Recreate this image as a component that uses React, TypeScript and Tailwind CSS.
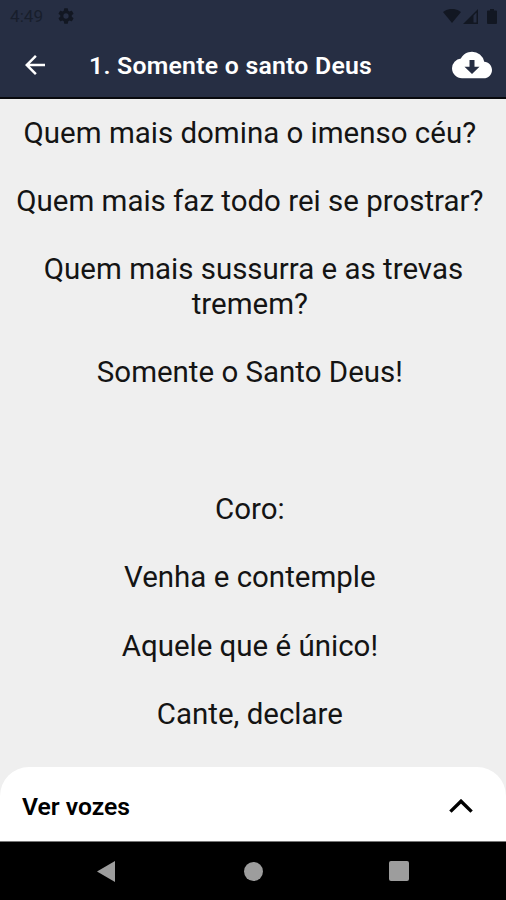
import { MdArrowBack } from "react-icons/md";

const lyrics = [
  "Quem mais domina o imenso céu?",
  "Quem mais faz todo rei se prostrar?",
  "Quem mais sussurra e as trevas tremem?",
  "Somente o Santo Deus!",
  "",
  "Coro:",
  "Venha e contemple",
  "Aquele que é único!",
  "Cante, declare",
];

export default function App() {
  return (
    <div className="flex h-[900px] w-[506px] flex-col overflow-hidden bg-[#efefef] font-['Roboto',sans-serif]">
      <StatusBar />
      <Header />
      <Lyrics />
      <VoicesSheet />
      <NavigationBar />
    </div>
  );
}

const StatusBar = () => {
  return (
    <div className="flex h-8 shrink-0 items-center justify-between bg-[#262e43] pr-[9px] pl-2.5 text-[#121722]">
      <div className="flex items-center gap-3.5">
        <span className="w-[34px] text-[17.200px] leading-8 whitespace-nowrap text-[#181e2c]">
          4:49
        </span>
        <svg viewBox="2 2 20 20" className="h-4 w-4" fill="currentColor">
          <path d="M19.14 12.94c.04-.3.06-.61.06-.94s-.02-.64-.07-.94l2.03-1.58a.49.49 0 0 0 .12-.61l-1.92-3.32a.49.49 0 0 0-.59-.22l-2.39.96a7 7 0 0 0-1.62-.94l-.36-2.54a.48.48 0 0 0-.48-.41h-3.84a.48.48 0 0 0-.47.41l-.36 2.54c-.59.24-1.13.57-1.62.94l-2.39-.96a.48.48 0 0 0-.59.22L2.74 8.87a.48.48 0 0 0 .12.61l2.03 1.58a6 6 0 0 0 0 1.88l-2.03 1.58a.49.49 0 0 0-.12.61l1.92 3.32c.12.22.37.29.59.22l2.39-.96c.5.38 1.03.7 1.62.94l.36 2.54c.05.24.24.41.48.41h3.84c.24 0 .44-.17.47-.41l.36-2.54a7 7 0 0 0 1.62-.94l2.39.96c.22.08.47 0 .59-.22l1.92-3.32a.48.48 0 0 0-.12-.61zM12 15.300a3.300 3.300 0 1 1 0-6.600 3.300 3.300 0 0 1 0 6.600" />
        </svg>
      </div>
      <div className="flex items-center">
        <svg viewBox="0 0 18 14" className="h-3.5 w-[18px]" fill="currentColor">
          <path d="M9 14 0 3a14.500 14.500 0 0 1 18 0z" />
        </svg>
        <svg
          viewBox="0 0 15 15"
          className="ml-0.5 h-[15px] w-[15px]"
          fill="currentColor"
        >
          <path d="M15 0v15H0zm-1.500 3.600L10.500 6.600v7h3z" fillRule="evenodd" />
        </svg>
        <svg
          viewBox="0 0 10 15"
          className="ml-[9px] h-[15px] w-2.5"
          fill="currentColor"
        >
          <path d="M3 0h4v1.500h2q1 0 1 1V14q0 1-1 1H1q-1 0-1-1V2.500q0-1 1-1h2z" />
        </svg>
      </div>
    </div>
  );
};

const Header = () => {
  return (
    <header className="flex h-[67px] shrink-0 items-center border-b-2 border-[#08090d] bg-[#262e43] pr-3.5 pl-5 text-white">
      <MdArrowBack size={30} />
      <h1 className="ml-[39px] flex-1 pt-[3px] text-[24.800px] leading-none font-semibold tracking-[0.240px] whitespace-nowrap">
        1. Somente o santo Deus
      </h1>
      <svg viewBox="0 0 24 24" className="h-10 w-10" fill="currentColor">
        <path
          d="M19.350 10.040A7.490 7.490 0 0 0 12 4C9.110 4 6.600 5.640 5.350 8.040A5.994 5.994 0 0 0 0 14c0 3.310 2.690 6 6 6h13c2.760 0 5-2.240 5-5 0-2.640-2.050-4.780-4.650-4.960zM10.500 9h3v4h3L12 17.400 7.500 13h3z"
          fillRule="evenodd"
        />
      </svg>
    </header>
  );
};

const Lyrics = () => {
  return (
    <main className="min-h-0 flex-1 overflow-hidden pt-[16.500px] pr-3 pl-[13px] text-center text-[29.480px] leading-[34.220px] text-[#141414]">
      {lyrics.map((line, i) => (
        <p key={i} className="mb-[34.220px] min-h-[34.220px]">
          {line}&nbsp;
        </p>
      ))}
    </main>
  );
};

const VoicesSheet = () => {
  return (
    <div className="flex h-[74px] shrink-0 items-center justify-between rounded-t-[29px] bg-white pt-[3px] pr-[33px] pl-[22px] text-black">
      <span className="pt-[3px] text-[24.700px] leading-none font-semibold">
        Ver vozes
      </span>
      <svg
        viewBox="0 0 24 14"
        className="h-3.5 w-6"
        fill="none"
        stroke="currentColor"
        strokeWidth="3.400"
      >
        <path d="M1.400 12.600 12 2.200l10.600 10.400" />
      </svg>
    </div>
  );
};

const NavigationBar = () => {
  return (
    <nav className="flex h-[59px] shrink-0 items-center border-t border-[#777] bg-black text-[#9d9d9d]">
      <svg
        viewBox="0 0 18 21"
        className="ml-[97px] h-[21px] w-[18px]"
        fill="currentColor"
      >
        <path d="M18 0v21L0 10.500z" />
      </svg>
      <div className="ml-[129px] h-[19px] w-[19px] rounded-full bg-[#9d9d9d]" />
      <div className="ml-[126px] h-5 w-5 rounded-[2px] bg-[#9d9d9d]" />
    </nav>
  );
};
